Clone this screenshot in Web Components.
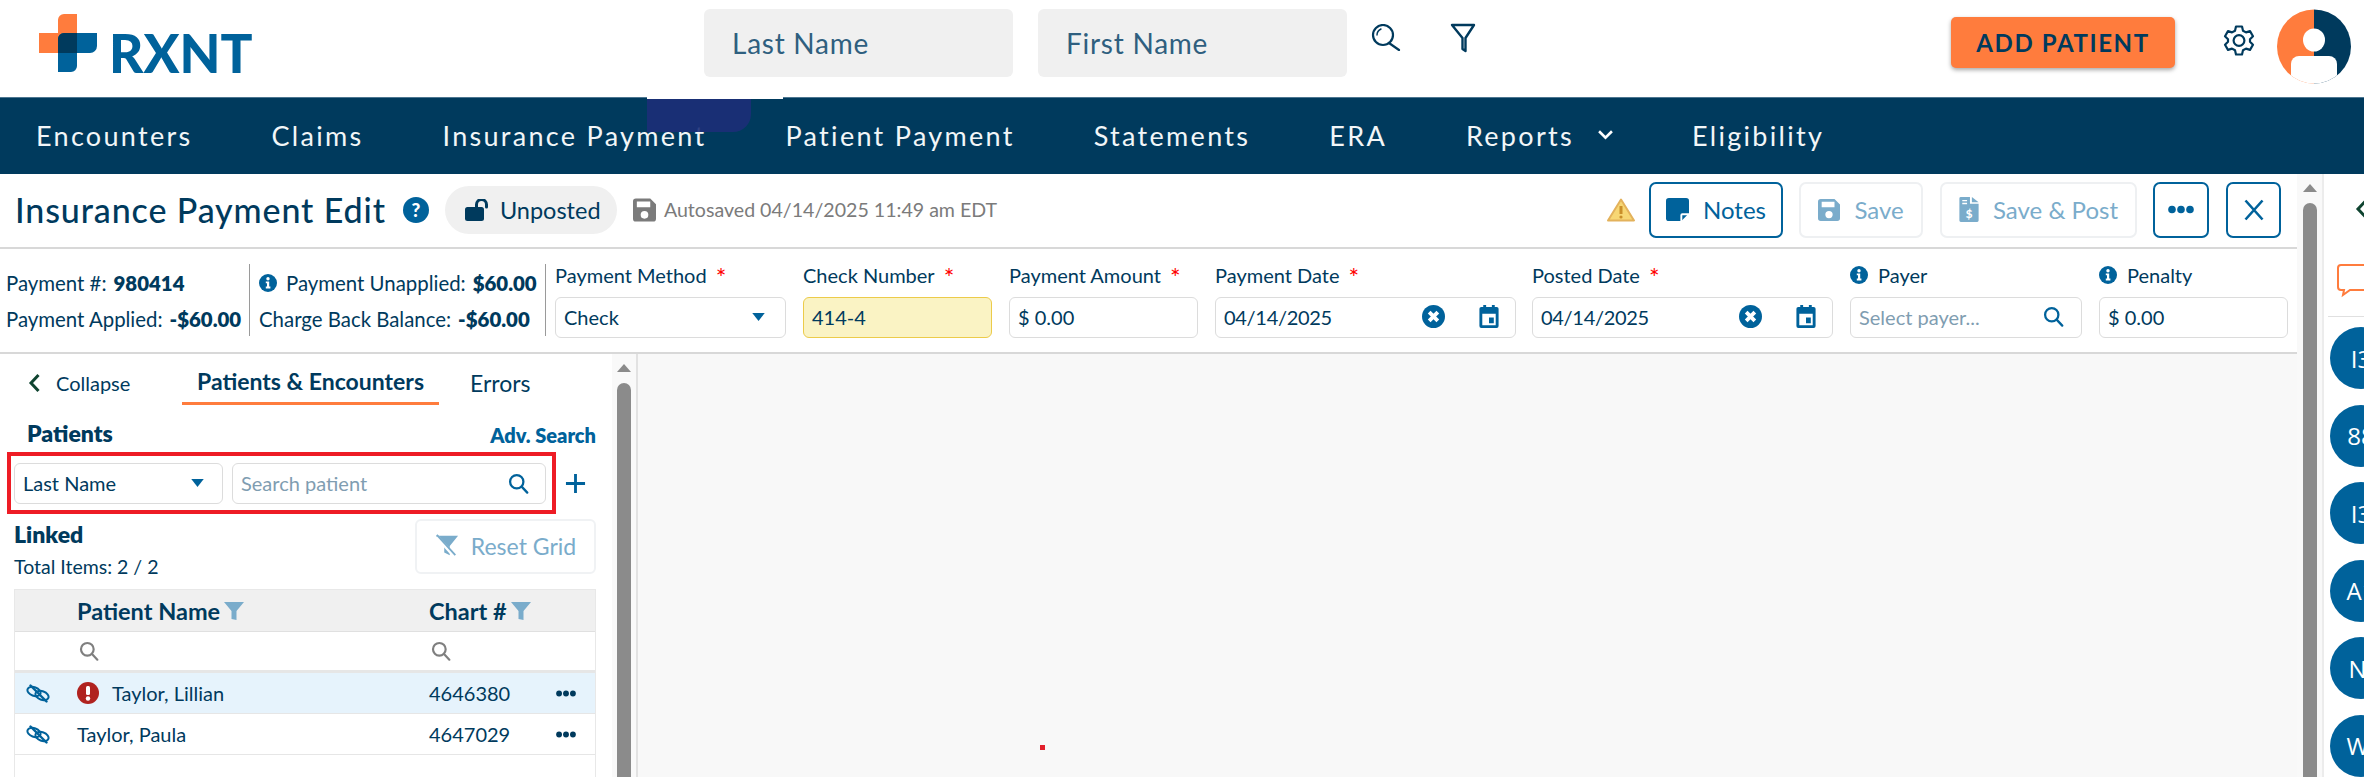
<!DOCTYPE html>
<html lang="en">
<head>
<meta charset="utf-8">
<title>Insurance Payment Edit</title>
<style>
  html, body { margin: 0; padding: 0; }
  body {
    width: 2364px; height: 777px; overflow: hidden; position: relative; background: #fff;
    font-family: "Lato", "Noto Sans", sans-serif; color: #003a5d;
    display: flex; flex-direction: column;
  }
</style>
</head>
<body>
<rx-header></rx-header>
<rx-nav></rx-nav>
<rx-workspace></rx-workspace>
<script>
"use strict";

// icon paths, all drawn on their own viewBox
const ICONS = {
  search: `<svg viewBox="0 0 24 24" fill="none" stroke="currentColor" stroke-width="2.6" stroke-linecap="round"><circle cx="10" cy="10" r="7.6"/><path d="M15.6 15.6 22 22.4"/></svg>`,
  topsearch: `<svg viewBox="0 0 30 27" fill="none" stroke="currentColor" stroke-width="2.2" stroke-linecap="round"><ellipse cx="12" cy="11" rx="10" ry="10"/><path d="M18 19l10 7"/><path d="M6 11c0-3 2-5 4-6" stroke-width="1.4"/></svg>`,
  funnel: `<svg viewBox="0 0 26 30" fill="none" stroke="currentColor" stroke-width="2.4" stroke-linejoin="round"><path d="M2 2h22L15.500 15v13l-3-2V15z"/></svg>`,
  gear: `<svg viewBox="0 0 32 32" fill="none" stroke="currentColor" stroke-width="2.200" stroke-linejoin="round"><path d="M13 2h6l1 4.200 3 1.700 4-1.300 3 5.200-3 3v2.400l3 3-3 5.200-4-1.300-3 1.700-1 4.200h-6l-1-4.200-3-1.700-4 1.300-3-5.200 3-3v-2.400l-3-3 3-5.200 4 1.300 3-1.700z"/><circle cx="16" cy="16" r="5.400"/></svg>`,
  help: `<svg viewBox="0 0 26 26"><circle cx="13" cy="13" r="13" fill="#00629b"/><text x="13" y="20" font-size="19" font-weight="900" text-anchor="middle" fill="#fff" font-family="Lato, sans-serif">?</text></svg>`,
  info: `<svg viewBox="0 0 18 18"><circle cx="9" cy="9" r="9" fill="#00629b"/><circle cx="9" cy="4.800" r="1.700" fill="#fff"/><path d="M6.800 7.400h3.400v5.200h1.200v1.800H6.800v-1.800H8V9.200H6.800z" fill="#fff"/></svg>`,
  lock: `<svg viewBox="0 0 25 22"><rect x="0" y="8" width="19" height="14" rx="2.500" fill="#003a5d"/><path d="M11.500 9V5.500a5 5 0 0 1 10 0V8" fill="none" stroke="#003a5d" stroke-width="3" stroke-linecap="round"/></svg>`,
  floppy: `<svg viewBox="0 0 24 24"><path fill="currentColor" fill-rule="evenodd" d="M3 0h15l6 6v15a3 3 0 0 1-3 3H3a3 3 0 0 1-3-3V3a3 3 0 0 1 3-3zm1 3v6h14V3zm8 10a4 4 0 1 0 0 8 4 4 0 0 0 0-8z"/></svg>`,
  warn: `<svg viewBox="0 0 28 24"><path d="M14 1.500 27 22.500H1z" fill="#f7d774" stroke="#e3b25c" stroke-width="2" stroke-linejoin="round"/><path d="M14 8v8" stroke="#c98f2a" stroke-width="3"/><circle cx="14" cy="19" r="1.600" fill="#c98f2a"/></svg>`,
  note: `<svg viewBox="0 0 24 24"><path fill="#00629b" d="M3 0h18a3 3 0 0 1 3 3v13l-8 8H3a3 3 0 0 1-3-3V3a3 3 0 0 1 3-3z"/><path fill="#fff" d="M24 16h-7a2 2 0 0 0-2 2v6h2v-6h7z"/></svg>`,
  invoice: `<svg viewBox="0 0 20 26"><path fill="currentColor" fill-rule="evenodd" d="M0 1.500A1.500 1.500 0 0 1 1.500 0H11v7h9v17.500a1.500 1.500 0 0 1-1.500 1.500h-17A1.500 1.500 0 0 1 0 24.500zM13 0l7 5.500h-7zM3 3v1.500h5V3zM3 6v1.500h5V6z"/><text x="10" y="21.500" font-size="12" font-weight="900" text-anchor="middle" fill="#fff" font-family="Lato, sans-serif">$</text></svg>`,
  dots: `<svg viewBox="0 0 26 8" fill="currentColor"><circle cx="4" cy="4" r="3.800"/><circle cx="13" cy="4" r="3.800"/><circle cx="22" cy="4" r="3.800"/></svg>`,
  close: `<svg viewBox="0 0 20 22" fill="none" stroke="currentColor" stroke-width="2.600"><path d="M1.500 1.500 18.500 20.500M18.500 1.500 1.500 20.500"/></svg>`,
  caret: `<svg viewBox="0 0 14 9"><path d="M0 0h14L7 9z" fill="#00629b"/></svg>`,
  chevdown: `<svg viewBox="0 0 14 9" fill="none" stroke="#fff" stroke-width="2.400"><path d="M1 1l6 6 6-6"/></svg>`,
  chevleft: `<svg viewBox="0 0 12 20" fill="none" stroke="#0f4430" stroke-width="3"><path d="M10 2 2.500 10 10 18"/></svg>`,
  clear: `<svg viewBox="0 0 24 24"><circle cx="12" cy="12" r="12" fill="#00629b"/><path d="M7.500 7.500l9 9m0-9-9 9" stroke="#fff" stroke-width="4"/></svg>`,
  calendar: `<svg viewBox="0 0 20 24"><path fill="#00629b" fill-rule="evenodd" d="M4 0h3v2h6V0h3v2h2a2 2 0 0 1 2 2v18a2 2 0 0 1-2 2H2a2 2 0 0 1-2-2V4a2 2 0 0 1 2-2h2zM3 9v12h14V9zm7 4h5v6h-5z"/></svg>`,
  plus: `<svg viewBox="0 0 22 22" stroke="#00629b" stroke-width="3"><path d="M11 1v20M1 11h20"/></svg>`,
  filter: `<svg viewBox="0 0 20 20"><path fill="#7aaccb" d="M0 1h20l-7.500 9v9l-5-1v-8z"/></svg>`,
  filteroff: `<svg viewBox="0 0 26 26"><path fill="currentColor" d="M1 2h24l-9 11v10l-6-3v-7z"/><path d="M2 3l20 22" stroke="#fff" stroke-width="4"/><path d="M2 1l20 22" stroke="currentColor" stroke-width="2"/></svg>`,
  unlink: `<svg viewBox="0 0 24 19" fill="none" stroke="#00629b" stroke-width="2" stroke-linecap="round"><ellipse cx="8" cy="7.500" rx="6.800" ry="4.300" transform="rotate(20 8 7.500)"/><ellipse cx="16" cy="11.500" rx="6.800" ry="4.300" transform="rotate(20 16 11.500)"/><path d="M4.500 1.500 20.500 17.500" stroke-width="2.400"/></svg>`,
  error: `<svg viewBox="0 0 22 22"><circle cx="11" cy="11" r="11" fill="#b0221f"/><rect x="9" y="4" width="4" height="9" rx="1.500" fill="#fff"/><circle cx="11" cy="16.500" r="2.200" fill="#fff"/></svg>`,
  chat: `<svg viewBox="0 0 40 34" fill="none" stroke="#ff7c3d" stroke-width="2"><path d="M5 1h30a3 3 0 0 1 3 3v19a3 3 0 0 1-3 3H14l-7 5 1-5H5a3 3 0 0 1-3-3V4a3 3 0 0 1 3-3z"/></svg>`
};

class RxIcon extends HTMLElement {
  connectedCallback() {
    const w = this.getAttribute("w") || 20, h = this.getAttribute("h") || w;
    const root = this.attachShadow({ mode: "open" });
    root.innerHTML = `<style>:host{display:inline-flex;flex:none;width:${w}px;height:${h}px}svg{display:block;width:100%;height:100%}</style>${ICONS[this.getAttribute("name")]}`;
  }
}
customElements.define("rx-icon", RxIcon);

class RxHeader extends HTMLElement {
  connectedCallback() {
    this.attachShadow({ mode: "open" }).innerHTML = `
    <style>
      :host { display: flex; flex: none; height: 97px; align-items: center; background: #fff; box-sizing: border-box; }
      .logo { display: flex; align-items: flex-start; width: 704px; padding-left: 39px; box-sizing: border-box; height: 58px; margin-bottom: 11px; }
      .logo svg { width: 58px; height: 58px; flex: none; }
      .word { font: 900 53px/39px "Lato", sans-serif; color: #00629b; margin: 19px 0 0 12px; letter-spacing: 0; height: 39px; }
      .box { width: 309px; height: 68px; background: #f0f0f0; border-radius: 6px; display: flex; align-items: center; padding-left: 28px; box-sizing: border-box;
             font-size: 28px; color: #2f5f7f; letter-spacing: .75px; margin-bottom: 11px; }
      .box + .box { margin-left: 25px; }
      .ic { margin: 0 0 22px 24px; display: flex; color: #003a5d; }
      .btn { margin: 0 0 12px 475px; width: 224px; height: 51px; background: #ff7c3d; border-radius: 5px; box-shadow: 0 2px 4px rgba(0,0,0,.35);
             display: flex; align-items: center; justify-content: center; font-size: 24px; font-weight: 700; letter-spacing: 1.600px; color: #003a5d; }
      .gear { margin: 0 0 17px 48px; display: flex; color: #003a5d; }
      .avatar { margin: 0 0 4px 22px; width: 74px; height: 75px; flex: none; }
    </style>
    <div class="logo">
      <svg viewBox="0 0 58 58">
        <path fill="#ff7c3d" d="M19 19V6a6 6 0 0 1 6-6h13v39H0V19z"/>
        <path fill="#00629b" d="M19 39V25a6 6 0 0 1 6-6h33v13a7 7 0 0 1-7 7H38v13a6 6 0 0 1-6 6H19z"/>
        <path fill="#003a5d" d="M19 39V25a6 6 0 0 1 6-6h13v20z"/>
      </svg>
      <div class="word">RXNT</div>
    </div>
    <div class="box">Last Name</div>
    <div class="box">First Name</div>
    <div class="ic"><rx-icon name="topsearch" w="30" h="27"></rx-icon></div>
    <div class="ic" style="margin-left:49px"><rx-icon name="funnel" w="26" h="30"></rx-icon></div>
    <div class="btn">ADD PATIENT</div>
    <div class="gear"><rx-icon name="gear" w="32" h="33"></rx-icon></div>
    <svg class="avatar" viewBox="0 0 74 75">
      <defs><clipPath id="c"><circle cx="37" cy="37.500" r="37"/></clipPath></defs>
      <g clip-path="url(#c)">
        <rect width="37" height="75" fill="#ff7c3d"/>
        <rect x="37" width="37" height="75" fill="#003a5d"/>
        <ellipse cx="37" cy="31" rx="11" ry="11.500" fill="#fff"/>
        <path d="M14 75V55a8 8 0 0 1 8-8h30a8 8 0 0 1 8 8v20z" fill="#fff"/>
      </g>
    </svg>`;
  }
}
customElements.define("rx-header", RxHeader);

class RxNav extends HTMLElement {
  connectedCallback() {
    const items = ["Encounters", "Claims", "Insurance Payment", "Patient Payment", "Statements", "ERA", "Reports", "Eligibility"];
    const links = items.map(t => t === "Reports"
      ? `<span class="it">${t}<rx-icon name="chevdown" w="15" h="10" style="margin-left:24px"></rx-icon></span>`
      : `<span class="it">${t}</span>`).join("");
    this.attachShadow({ mode: "open" }).innerHTML = `
    <style>
      :host { display: flex; flex: none; position: relative; height: 77px; box-sizing: border-box; background: #003a5d; border-top: 1px solid #4d7690;
              align-items: center; gap: 79px; padding: 0 0 2px 36px; color: #f2f6f8; font-size: 27px; letter-spacing: 2.300px; }
      .it { display: inline-flex; align-items: center; white-space: nowrap; }
      /* screenshot leftovers lying over the bar */
      .smudge { position: absolute; left: 647px; top: 1px; width: 104px; height: 33px; background: #1c2f78; border-radius: 0 0 18px 0; opacity: .9; }
      .strip { position: absolute; left: 647px; top: -1px; width: 136px; height: 2px; background: #fff; }
    </style>
    <div class="smudge"></div><div class="strip"></div>
    ${links}`;
  }
}
customElements.define("rx-nav", RxNav);

class RxButton extends HTMLElement {
  connectedCallback() {
    this.attachShadow({ mode: "open" }).innerHTML = `
    <style>
      :host { display: inline-flex; flex: none; box-sizing: border-box; height: 56px; border: 2px solid #00629b; border-radius: 7px; align-items: center; justify-content: center; gap: 14px;
              font-size: 24px; color: #00629b; }
      :host([disabled]) { border-color: #eef0f2; color: #7aaccb; }
    </style><slot></slot>`;
  }
}
customElements.define("rx-button", RxButton);

class RxTitleBar extends HTMLElement {
  connectedCallback() {
    this.attachShadow({ mode: "open" }).innerHTML = `
    <style>
      :host { display: flex; flex: none; height: 75px; box-sizing: border-box; border-bottom: 2px solid #d8d8d8; align-items: center; padding: 0 16px 2px 15px; }
      h1 { font-size: 34px; font-weight: 500; margin: 0; letter-spacing: .88px; color: #003a5d; white-space: nowrap; }
      .pill { margin-left: 16px; width: 172px; height: 48px; background: #f0f0f0; border-radius: 24px; display: flex; align-items: center; gap: 10px; padding-left: 20px; box-sizing: border-box; font-size: 23.500px; color: #003a5d; }
      .saved { margin-left: 16px; display: flex; align-items: center; gap: 8px; color: #7b7b7b; font-size: 19.600px; white-space: nowrap; }
      .right { margin-left: auto; display: flex; align-items: center; }
    </style>
    <h1>Insurance Payment Edit</h1>
    <rx-icon name="help" w="26" style="margin-left:17px"></rx-icon>
    <div class="pill"><rx-icon name="lock" w="25" h="22"></rx-icon>Unposted</div>
    <div class="saved"><rx-icon name="floppy" w="23" h="24"></rx-icon>Autosaved 04/14/2025 11:49 am EDT</div>
    <div class="right">
      <rx-icon name="warn" w="28" h="24" style="margin-right:14px"></rx-icon>
      <rx-button style="width:134px"><rx-icon name="note" w="23" h="23"></rx-icon>Notes</rx-button>
      <rx-button disabled style="width:124px;margin-left:16px"><rx-icon name="floppy" w="22" h="22"></rx-icon>Save</rx-button>
      <rx-button disabled style="width:197px;margin-left:17px"><rx-icon name="invoice" w="20" h="25"></rx-icon>Save &amp; Post</rx-button>
      <rx-button style="width:56px;margin-left:16px;color:#00629b"><rx-icon name="dots" w="26" h="9"></rx-icon></rx-button>
      <rx-button style="width:55px;margin-left:17px"><rx-icon name="close" w="20" h="22"></rx-icon></rx-button>
    </div>`;
  }
}
customElements.define("rx-title-bar", RxTitleBar);

class RxField extends HTMLElement {
  connectedCallback() {
    const req = this.hasAttribute("required") ? `<span class="req">*</span>` : "";
    const info = this.hasAttribute("info") ? `<rx-icon name="info" w="18" style="margin-right:10px"></rx-icon>` : "";
    this.attachShadow({ mode: "open" }).innerHTML = `
    <style>
      :host { display: flex; flex-direction: column; flex: none; }
      .lab { height: 41px; display: flex; align-items: center; padding-bottom: 3px; box-sizing: border-box; font-size: 20px; color: #003a5d; white-space: nowrap; }
      .req { color: #f00; margin-left: 9px; font-size: 25px; line-height: 20px; padding-top: 4px; }
      .box { box-sizing: border-box; height: 41px; border: 1.500px solid #dcdcdc; border-radius: 6px; display: flex; align-items: center; padding: 0 8px 2px; font-size: 20px; color: #003a5d; background: #fff; }
      :host([highlight]) .box { background: #faf3c4; border-color: #eccb4a; }
      :host([placeholder]) .box { color: #7f9db1; }
      ::slotted([slot=end]) { margin-left: auto; }
    </style>
    <div class="lab">${info}${this.getAttribute("label")}${req}</div>
    <div class="box"><slot></slot><slot name="end"></slot></div>`;
  }
}
customElements.define("rx-field", RxField);

class RxInfoBar extends HTMLElement {
  connectedCallback() {
    const date = `<span style="letter-spacing:-.3px">04/14/2025</span><rx-icon slot="end" name="clear" w="23" style="margin-right:34px"></rx-icon><rx-icon slot="end" name="calendar" w="20" h="23" style="margin:0 8px 0 0"></rx-icon>`;
    this.attachShadow({ mode: "open" }).innerHTML = `
    <style>
      :host { display: flex; flex: none; height: 105px; box-sizing: border-box; border-bottom: 2px solid #d8d8d8; padding-top: 7px; }
      .sum { font-size: 20.400px; color: #003a5d; display: grid; align-content: start; row-gap: 6px; height: 72px; margin-top: 8px; padding: 4px 9px 0 6px; box-sizing: border-box; border-right: 1.500px solid #9a9a9a; white-space: nowrap; }
      .sum div { height: 30px; display: flex; align-items: center; gap: 7px; }
      .sum b { font-weight: 800; }
      .two { padding-left: 9px; width: 296px; }
      .one { width: 250px; }
      .fields { display: flex; gap: 17px; margin-left: 9px; }
      rx-field:nth-child(5) { margin-left: -1px; }
    </style>
    <div class="sum one">
      <div>Payment #: <b>980414</b></div>
      <div>Payment Applied: <b>-$60.00</b></div>
    </div>
    <div class="sum two">
      <div><rx-icon name="info" w="18"></rx-icon><span style="margin-left:2px">Payment Unapplied:</span> <b>$60.00</b></div>
      <div>Charge Back Balance: <b>-$60.00</b></div>
    </div>
    <div class="fields">
      <rx-field label="Payment Method" required style="width:231px">Check<rx-icon slot="end" name="caret" w="13" h="8" style="margin-right:12px"></rx-icon></rx-field>
      <rx-field label="Check Number" required highlight style="width:189px">414-4</rx-field>
      <rx-field label="Payment Amount" required style="width:189px">$ 0.00</rx-field>
      <rx-field label="Payment Date" required style="width:301px">${date}</rx-field>
      <rx-field label="Posted Date" required style="width:301px">${date}</rx-field>
      <rx-field label="Payer" info placeholder style="width:232px">Select payer...<rx-icon slot="end" name="search" w="21" style="color:#00629b;margin-right:9px"></rx-icon></rx-field>
      <rx-field label="Penalty" info style="width:189px">$ 0.00</rx-field>
    </div>`;
  }
}
customElements.define("rx-info-bar", RxInfoBar);

class RxScrollbar extends HTMLElement {
  connectedCallback() {
    this.attachShadow({ mode: "open" }).innerHTML = `
    <style>
      :host { display: flex; flex-direction: column; align-items: center; flex: none; background: #f9f9f9; box-sizing: border-box; padding-top: 10px; }
      .up { width: 0; height: 0; border: 7.500px solid transparent; border-top: 0; border-bottom: 8px solid #8b8b8b; }
      .thumb { flex: 1; width: 14px; margin-top: 11px; background: #8b8b8b; border-radius: 7px 7px 0 0; }
    </style><div class="up"></div><div class="thumb"></div>`;
  }
}
customElements.define("rx-scrollbar", RxScrollbar);

class RxPatientRow extends HTMLElement {
  connectedCallback() {
    const flag = this.hasAttribute("flag") ? `<rx-icon name="error" w="22" style="margin-right:13px"></rx-icon>` : "";
    this.attachShadow({ mode: "open" }).innerHTML = `
    <style>
      :host { display: grid; grid-template-columns: 62px 352px 1fr; height: 41px; align-items: center; box-sizing: border-box; border-bottom: 1.500px solid #e6e6e6; font-size: 20px; color: #003a5d; }
      :host([active]) { background: #e6f3fc; }
      .ic { padding-left: 11px; display: flex; }
      .nm { display: flex; align-items: center; }
      .ch { display: flex; align-items: center; justify-content: space-between; padding-right: 19px; }
    </style>
    <div class="ic"><rx-icon name="unlink" w="24" h="19"></rx-icon></div>
    <div class="nm">${flag}${this.getAttribute("name")}</div>
    <div class="ch">${this.getAttribute("chart")}<rx-icon name="dots" w="20" h="7"></rx-icon></div>`;
  }
}
customElements.define("rx-patient-row", RxPatientRow);

class RxPatientGrid extends HTMLElement {
  connectedCallback() {
    this.attachShadow({ mode: "open" }).innerHTML = `
    <style>
      :host { display: block; flex: 1; margin: 10px 0 0 14px; width: 582px; box-sizing: border-box; border: 1.500px solid #e8e8e8; border-bottom: 0; }
      .head, .filt { display: grid; grid-template-columns: 62px 352px 1fr; align-items: center; }
      .head { height: 42px; background: #f0f0f0; border-bottom: 1.500px solid #e0e0e0; font-size: 23.500px; font-weight: 700; color: #003a5d; box-sizing: border-box; }
      .head span { display: flex; align-items: center; gap: 4px; }
      .filt { height: 41px; border-bottom: 3px solid #e6e6e6; box-sizing: border-box; color: #7f7f7f; }
    </style>
    <div class="head"><i></i><span>Patient Name<rx-icon name="filter" w="20"></rx-icon></span><span>Chart #<rx-icon name="filter" w="20"></rx-icon></span></div>
    <div class="filt"><i></i><rx-icon name="search" w="20" style="margin-left:2px"></rx-icon><rx-icon name="search" w="20" style="margin-left:2px"></rx-icon></div>
    <rx-patient-row active flag name="Taylor, Lillian" chart="4646380"></rx-patient-row>
    <rx-patient-row name="Taylor, Paula" chart="4647029"></rx-patient-row>`;
  }
}
customElements.define("rx-patient-grid", RxPatientGrid);

class RxSidePanel extends HTMLElement {
  connectedCallback() {
    this.attachShadow({ mode: "open" }).innerHTML = `
    <style>
      :host { display: flex; flex-direction: column; flex: none; width: 612px; overflow: hidden; box-sizing: border-box; color: #003a5d; }
      .tabs { height: 51px; display: flex; align-items: center; flex: none; }
      .collapse { display: flex; align-items: center; gap: 15px; width: 182px; padding-left: 28px; box-sizing: border-box; font-size: 20px; padding-top: 7px; }
      .tab { width: 257px; height: 51px; box-sizing: border-box; border-bottom: 3px solid #ff7c3d; display: flex; align-items: center; justify-content: center; font-size: 23px; font-weight: 700; padding-top: 6px; }
      .err { margin-left: 31px; font-size: 23px; padding-top: 6px; }
      .row { display: flex; justify-content: space-between; align-items: center; padding: 8px 16px 0 27px; height: 47px; box-sizing: border-box; flex: none; }
      .row b { font-size: 23px; font-weight: 800; }
      .adv { font-size: 20px; font-weight: 800; color: #00629b; padding-top: 4px; }
      .searchline { display: flex; align-items: center; flex: none; padding-left: 7px; }
      .redbox { width: 549px; height: 62px; border: 4px solid #ee1c25; box-sizing: border-box; display: flex; align-items: center; gap: 9px; padding: 0 6px 0 3px; font-size: 20px; }
      .in { height: 41px; box-sizing: border-box; border: 1.500px solid #dcdcdc; border-radius: 6px; display: flex; align-items: center; justify-content: space-between; padding: 0 8px; }
      .ph { color: #7f9db1; }
      .linked { display: flex; justify-content: space-between; padding: 5px 16px 0 14px; flex: none; }
      .linked b { font-size: 23px; font-weight: 800; display: block; height: 36px; line-height: 30px; }
      .tot { font-size: 19.500px; line-height: 24px; display: block; }
      .reset { width: 181px; height: 55px; border: 2px solid #f0f2f4; border-radius: 6px; box-sizing: border-box; display: flex; align-items: center; justify-content: center; gap: 12px; font-size: 23px; color: #7aaccb; padding-bottom: 2px; }
    </style>
    <div class="tabs">
      <div class="collapse"><rx-icon name="chevleft" w="13" h="20"></rx-icon>Collapse</div>
      <div class="tab">Patients &amp; Encounters</div>
      <div class="err">Errors</div>
    </div>
    <div class="row"><b>Patients</b><span class="adv">Adv. Search</span></div>
    <div class="searchline">
      <div class="redbox">
        <div class="in" style="width:209px">Last Name<rx-icon name="caret" w="13" h="8" style="margin-right:10px"></rx-icon></div>
        <div class="in ph" style="width:314px">Search patient<rx-icon name="search" w="21" style="color:#00629b;margin-right:8px"></rx-icon></div>
      </div>
      <rx-icon name="plus" w="21" style="margin-left:9px"></rx-icon>
    </div>
    <div class="linked">
      <div><b>Linked</b><span class="tot">Total Items: 2 / 2</span></div>
      <div class="reset"><rx-icon name="filteroff" w="24"></rx-icon>Reset Grid</div>
    </div>
    <rx-patient-grid></rx-patient-grid>`;
  }
}
customElements.define("rx-side-panel", RxSidePanel);

class RxRail extends HTMLElement {
  connectedCallback() {
    const badges = ["I3", "88", "I3", "A1", "NI", "WI"].map(t => `<div class="b">${t}</div>`).join("");
    this.attachShadow({ mode: "open" }).innerHTML = `
    <style>
      :host { display: flex; flex-direction: column; flex: 1; min-width: 0; overflow: hidden; border-left: 2px solid #ececec; box-sizing: border-box; }
      .chev { height: 70px; padding: 25px 0 0 31px; box-sizing: border-box; }
      .chat { height: 73px; margin-left: 4px; padding: 20px 0 0 8px; box-sizing: border-box; border-bottom: 1.500px solid #e0e0e0; }
      .list { display: flex; flex-direction: column; gap: 15.600px; padding: 10px 0 0 6px; }
      .b { width: 62px; height: 62px; flex: none; border-radius: 50%; background: #00629b; color: #fff; font: 500 24px "Open Sans", sans-serif; display: flex; align-items: center; justify-content: center; }
    </style>
    <div class="chev"><rx-icon name="chevleft" w="13" h="20"></rx-icon></div>
    <div class="chat"><rx-icon name="chat" w="40" h="34"></rx-icon></div>
    <div class="list">${badges}</div>`;
  }
}
customElements.define("rx-rail", RxRail);

class RxWorkspace extends HTMLElement {
  connectedCallback() {
    this.attachShadow({ mode: "open" }).innerHTML = `
    <style>
      :host { display: flex; flex: 1; min-height: 0; overflow: hidden; }
      .col { width: 2297px; flex: none; display: flex; flex-direction: column; }
      .body { flex: 1; min-height: 0; display: flex; }
      .canvas { flex: 1; background: #f8f8f8; border-left: 2px solid #e2e2e2; position: relative; }
      /* stray red mark in the empty canvas */
      .dot { position: absolute; left: 402px; top: 391px; width: 5px; height: 5px; background: #e2202c; }
    </style>
    <div class="col">
      <rx-title-bar></rx-title-bar>
      <rx-info-bar></rx-info-bar>
      <div class="body">
        <rx-side-panel></rx-side-panel>
        <rx-scrollbar style="width:24px;padding-top:10px"></rx-scrollbar>
        <div class="canvas"><div class="dot"></div></div>
      </div>
    </div>
    <rx-scrollbar style="width:25px"></rx-scrollbar>
    <rx-rail></rx-rail>`;
  }
}
customElements.define("rx-workspace", RxWorkspace);
</script>
</body>
</html>
